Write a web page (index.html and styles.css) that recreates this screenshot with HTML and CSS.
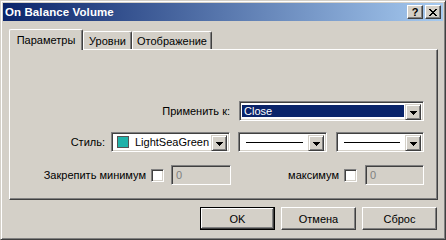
FILE: index.html
```html
<!DOCTYPE html>
<html>
<head>
<meta charset="utf-8">
<link rel="stylesheet" href="styles.css">
</head>
<body>
<div class="window">
  <div class="titlebar">
    <span class="title">On Balance Volume</span>
    <div class="tb-buttons">
      <span class="tb-btn help">?</span>
      <span class="tb-btn close">
        <svg width="8" height="7" viewBox="0 0 8 7" shape-rendering="crispEdges">
          <path d="M0 0h2v1h-2zM6 0h2v1h-2zM1 1h2v1h-2zM5 1h2v1h-2zM2 2h4v1h-4zM3 3h2v1h-2zM2 4h4v1h-4zM1 5h2v1h-2zM5 5h2v1h-2zM0 6h2v1h-2zM6 6h2v1h-2z" fill="#000"/>
        </svg>
      </span>
    </div>
  </div>
  <div class="body">
    <div class="tabs">
      <div class="tab active">Параметры</div>
      <div class="tab t2">Уровни</div>
      <div class="tab t3">Отображение</div>
    </div>
    <div class="panel">
      <div class="row row-apply">
        <span class="label">Применить к:</span>
        <div class="combo combo-apply">
          <div class="field"><span class="sel">Close</span></div>
          <span class="drop"><svg width="7" height="4" viewBox="0 0 7 4" shape-rendering="crispEdges"><path d="M0 0h7v1h-7zM1 1h5v1h-5zM2 2h3v1h-3zM3 3h1v1h-1z" fill="#000"/></svg></span>
        </div>
      </div>
      <div class="row row-style">
        <span class="label style-label">Стиль:</span>
        <div class="combo combo-color">
          <div class="field"><span class="swatch"></span><span class="ctext">LightSeaGreen</span></div>
          <span class="drop"><svg width="7" height="4" viewBox="0 0 7 4" shape-rendering="crispEdges"><path d="M0 0h7v1h-7zM1 1h5v1h-5zM2 2h3v1h-3zM3 3h1v1h-1z" fill="#000"/></svg></span>
        </div>
        <div class="combo combo-line l1">
          <div class="field"><span class="line"></span></div>
          <span class="drop"><svg width="7" height="4" viewBox="0 0 7 4" shape-rendering="crispEdges"><path d="M0 0h7v1h-7zM1 1h5v1h-5zM2 2h3v1h-3zM3 3h1v1h-1z" fill="#000"/></svg></span>
        </div>
        <div class="combo combo-line l2">
          <div class="field"><span class="line"></span></div>
          <span class="drop"><svg width="7" height="4" viewBox="0 0 7 4" shape-rendering="crispEdges"><path d="M0 0h7v1h-7zM1 1h5v1h-5zM2 2h3v1h-3zM3 3h1v1h-1z" fill="#000"/></svg></span>
        </div>
      </div>
      <div class="row row-fix">
        <div class="fix-group left">
          <span class="label">Закрепить минимум</span>
          <span class="check"></span>
          <span class="textbox tb-min">0</span>
        </div>
        <div class="fix-group right">
          <span class="label">максимум</span>
          <span class="check"></span>
          <span class="textbox tb-max">0</span>
        </div>
      </div>
    </div>
    <div class="buttons">
      <span class="btn default"><span>OK</span></span>
      <span class="btn">Отмена</span>
      <span class="btn">Сброс</span>
    </div>
  </div>
</div>
</body>
</html>
```

FILE: styles.css
```css
* { box-sizing: border-box; }

body {
  margin: 0;
  background: #D4D0C8;
  font-family: "Liberation Sans", Arial, sans-serif;
  font-size: 11px;
  color: #000;
}

.window {
  width: 446px;
  height: 240px;
  border: 1px solid;
  border-color: #D4D0C8 #404040 #404040 #D4D0C8;
  box-shadow: inset 1px 1px #FFFFFF, inset -1px -1px #808080;
  padding: 2px;
  background: #D4D0C8;
  display: flex;
  flex-direction: column;
}

.titlebar {
  height: 18px;
  flex: none;
  background: linear-gradient(to right, #0A246A, #A6CAF0);
  display: flex;
  align-items: center;
  justify-content: space-between;
  padding: 0 2px;
}

.title {
  color: #fff;
  font-weight: bold;
  font-size: 11.5px;
  letter-spacing: 0.1px;
}

.tb-buttons {
  display: flex;
  gap: 2px;
}

.tb-btn {
  width: 16px;
  height: 14px;
  background: #D4D0C8;
  border: 1px solid;
  border-color: #FFFFFF #404040 #404040 #FFFFFF;
  box-shadow: inset -1px -1px #808080;
  display: flex;
  align-items: center;
  justify-content: center;
  color: #000;
  font-weight: bold;
  font-size: 11px;
  line-height: 1;
}

.body {
  flex: 1;
  display: flex;
  flex-direction: column;
  padding: 8px 5px 0 6px;
}

.tabs {
  display: flex;
  height: 20px;
  flex: none;
}

.tab {
  height: 18px;
  margin-top: 2px;
  border: 1px solid;
  border-bottom: none;
  border-color: #FFFFFF #404040 #404040 #FFFFFF;
  border-radius: 2px 2px 0 0;
  box-shadow: inset -1px 0 #808080;
  background: #D4D0C8;
  display: flex;
  align-items: center;
  justify-content: center;
}

.tab.active {
  width: 74px;
  height: 21px;
  margin-top: 0;
  margin-bottom: -1px;
  position: relative;
  z-index: 1;
}

.tab.t2 { width: 49px; }
.tab.t3 { width: 80px; }

.panel {
  width: 429px;
  height: 151px;
  flex: none;
  border: 1px solid;
  border-color: #FFFFFF #404040 #404040 #FFFFFF;
  box-shadow: inset -1px -1px #808080;
  padding: 51px 13px 0 0;
  display: flex;
  flex-direction: column;
}

.row {
  display: flex;
  align-items: center;
  justify-content: flex-end;
  height: 20px;
}

.row-style { margin-top: 11px; }
.row-fix { margin-top: 13px; justify-content: flex-start; }

.label { white-space: nowrap; }

.row-apply .label { margin-right: 9px; }
.style-label { margin-right: 6px; }

.combo {
  height: 20px;
  border: 1px solid;
  border-color: #808080 #FFFFFF #FFFFFF #808080;
  box-shadow: inset 1px 1px #404040, inset -1px -1px #D4D0C8;
  background: #fff;
  padding: 2px 2px 2px 2px;
  display: flex;
}

.combo .field {
  flex: 1;
  display: flex;
  align-items: center;
  min-width: 0;
}

.drop {
  width: 16px;
  height: 16px;
  flex: none;
  background: #D4D0C8;
  border: 1px solid;
  border-color: #D4D0C8 #404040 #404040 #D4D0C8;
  box-shadow: inset 1px 1px #FFFFFF, inset -1px -1px #808080;
  display: flex;
  align-items: center;
  justify-content: center;
  padding-top: 1px;
}

.combo-apply { width: 185px; }
.combo-apply .field { padding: 1px 1px 1px 0; align-items: stretch; }
.sel {
  flex: 1;
  background: #0A246A;
  color: #fff;
  padding-left: 2px;
  display: flex;
  align-items: center;
}

.combo-color { width: 119px; }
.swatch {
  width: 12px;
  height: 12px;
  margin-left: 3px;
  background: #20B2AA;
  border: 1px solid #555;
}
.ctext { margin-left: 6px; white-space: nowrap; }

.combo-line { margin-left: 9px; }
.combo-line.l1 { width: 89px; margin-left: 8px; }
.combo-line.l2 { width: 88px; }
.line {
  flex: 1;
  height: 1px;
  background: #000;
  margin: 0 5px 0 5px;
}

.fix-group {
  display: flex;
  align-items: center;
  justify-content: flex-end;
}

.fix-group.left { width: 221px; }
.fix-group.right { flex: 1; }

.check {
  width: 13px;
  height: 13px;
  margin-left: 5px;
  background: #fff;
  border: 1px solid;
  border-color: #808080 #FFFFFF #FFFFFF #808080;
  box-shadow: inset 1px 1px #404040, inset -1px -1px #D4D0C8;
}

.textbox {
  height: 20px;
  margin-left: 7px;
  border: 1px solid;
  border-color: #808080 #FFFFFF #FFFFFF #808080;
  box-shadow: inset 1px 1px #404040, inset -1px -1px #D4D0C8;
  background: #D4D0C8;
  color: #808080;
  padding-left: 4px;
  display: flex;
  align-items: center;
}

.tb-min { width: 60px; }
.tb-max { width: 59px; margin-left: 8px; }

.buttons {
  display: flex;
  justify-content: flex-end;
  gap: 6px;
  margin-top: 7px;
  padding-right: 1px;
}

.btn {
  width: 75px;
  height: 23px;
  border: 1px solid;
  border-color: #FFFFFF #404040 #404040 #FFFFFF;
  box-shadow: inset -1px -1px #808080;
  display: flex;
  align-items: center;
  justify-content: center;
  background: #D4D0C8;
}

.btn.default {
  border: 1px solid #000;
  box-shadow: inset -1px -1px #404040, inset 1px 1px #FFFFFF, inset -2px -2px #808080;
}
```
